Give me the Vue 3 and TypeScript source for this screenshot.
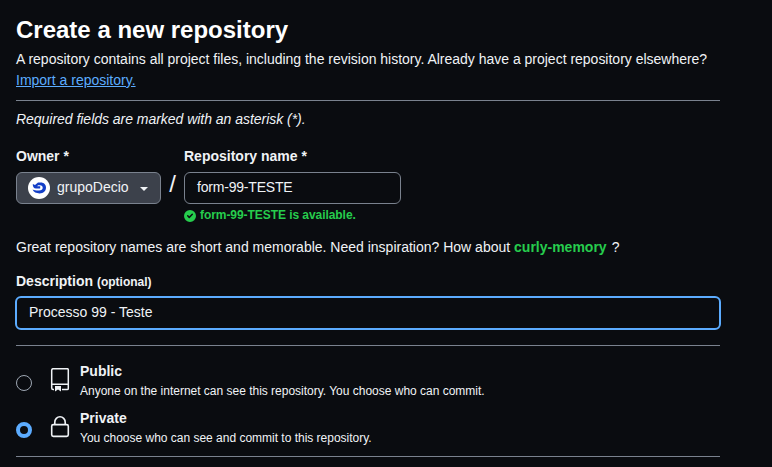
<script setup lang="ts">
import { ref } from 'vue'

interface Visibility {
  id: string
  title: string
  note: string
}

const owner = ref('grupoDecio')
const repoName = ref('form-99-TESTE')
const description = ref('Processo 99 - Teste')
const selected = ref('private')
const options: Visibility[] = [
  { id: 'public', title: 'Public', note: 'Anyone on the internet can see this repository. You choose who can commit.' },
  { id: 'private', title: 'Private', note: 'You choose who can see and commit to this repository.' },
]
</script>

<template>
  <main class="page">
    <h1 class="title">Create a new repository</h1>
    <p class="lead">
      <span>A repository contains all project files, including the revision history. Already have a project repository elsewhere?</span><br />
      <a class="link" href="#">Import a repository.</a>
    </p>
    <p class="required">Required fields are marked with an asterisk (*).</p>

    <div class="names">
      <div class="owner">
        <label class="label">Owner *</label>
        <button class="owner-btn" type="button">
          <svg class="avatar" width="22" height="22" viewBox="0 0 22 22">
            <circle cx="11" cy="11" r="11" fill="#fff" />
            <path d="M4.8 7 L7 8 L10 5.4 H12.8 C16 5.4 18 7.6 18 10.6 C18 14.2 15.3 16.4 11.6 16.4 C8.2 16.4 5.6 15.2 4.6 12.6 C6.6 13.4 8.4 13.6 11 13.5 C13.4 13.4 14.7 12.5 14.7 10.7 C14.7 9.2 13.8 8.3 12 8.3 H10 L9.2 9.2 H12.2 V11.6 H8 C5.8 11.6 4.6 9.6 4.8 7 Z" fill="#143fc7" />
          </svg>
          <span class="owner-name">{{ owner }}</span>
          <svg class="caret" width="8" height="4" viewBox="0 0 8 4"><path d="M0 0h8L4 4z" fill="#f0f3f6" /></svg>
        </button>
      </div>
      <span class="slash">/</span>
      <div class="repo">
        <label class="label">Repository name *</label>
        <div class="field repo-field">{{ repoName }}</div>
        <div class="available">
          <svg width="12" height="12" viewBox="0 0 12 12">
            <path fill="#26cd4d" fill-rule="evenodd" d="M6 0a6 6 0 1 1 0 12A6 6 0 0 1 6 0Zm2.83 4.83a.75.75 0 0 0-1.06-1.06L5.25 6.29 4.23 5.27a.75.75 0 0 0-1.06 1.06l1.55 1.55a.75.75 0 0 0 1.06 0Z" />
          </svg>
          <span>{{ repoName }} is available.</span>
        </div>
      </div>
    </div>

    <p class="hint">Great repository names are short and memorable. Need inspiration? How about <strong>curly-memory</strong><span class="q">?</span></p>

    <label class="label desc-label">Description <small>(optional)</small></label>
    <div class="field desc-field">{{ description }}</div>

    <div class="choices">
      <div v-for="o in options" :key="o.id" class="choice" @click="selected = o.id">
        <span class="radio" :class="{ on: selected === o.id }"></span>
        <svg v-if="o.id === 'public'" class="icon" width="24" height="24" viewBox="0 0 24 24" fill="none" stroke="#f0f3f6" stroke-width="1.5">
          <path d="M6 21.6H5.2A1.5 1.5 0 0 1 3.7 20.1V2.2A1.5 1.5 0 0 1 5.2.7H19.2A1.1 1.1 0 0 1 20.3 1.8V20.5A1.1 1.1 0 0 1 19.2 21.6H14M3.7 16.3H20.3" />
          <path d="M7 18h6v5.5l-3-1.9-3 1.9z" fill="#f0f3f6" stroke="none" />
        </svg>
        <svg v-else class="icon" width="24" height="24" viewBox="0 0 24 24" fill="none" stroke="#f0f3f6" stroke-width="1.6">
          <rect x="3.7" y="9.6" width="16.6" height="11.8" rx="1.6" />
          <path d="M6.8 9.6V7.2a5.2 5.4 0 0 1 10.4 0v2.4" />
        </svg>
        <div class="choice-text">
          <div class="choice-title">{{ o.title }}</div>
          <div class="choice-note">{{ o.note }}</div>
        </div>
      </div>
    </div>
  </main>
</template>

<style>
body {
  background: #0a0c10;
}
</style>

<style scoped>
.page {
  box-sizing: border-box;
  width: 772px;
  height: 467px;
  overflow: hidden;
  padding: 12px 52px 0 16px;
  background: #0a0c10;
  color: #f0f3f6;
  font: 14px/21px "Liberation Sans", Arial, sans-serif;
  white-space: nowrap;
}
.title {
  margin: 0;
  font-size: 24px;
  line-height: 36px;
  font-weight: 700;
  color: #fff;
}
.lead {
  margin: 0;
  padding-top: 1px;
  height: 51px;
  border-bottom: 1px solid #7a828e;
}
.lead span {
  letter-spacing: -0.01px;
}
.link {
  color: #5cacff;
  text-decoration: underline;
}
.required {
  margin: 8px 0 0;
  font-style: italic;
  letter-spacing: -0.03px;
}
.names {
  display: flex;
  margin-top: 16px;
}
.label {
  display: block;
  font-weight: 700;
}
.owner-btn {
  display: flex;
  align-items: center;
  box-sizing: border-box;
  width: 145px;
  height: 32px;
  margin-top: 5px;
  padding: 0 11px;
  border: 1px solid #7a828e;
  border-radius: 6px;
  background: #3c414b;
  color: #f0f3f6;
  font: inherit;
}
.owner-name {
  margin: -2px 0 0 7px;
}
.caret {
  margin: 2px 1px 0 auto;
}
.slash {
  width: 23px;
  padding-top: 27px;
  text-align: center;
  font-size: 24px;
  line-height: 21px;
}
.field {
  box-sizing: border-box;
  border: 1px solid #7a828e;
  border-radius: 6px;
  padding: 0 12px;
  line-height: 29px;
}
.repo-field {
  width: 217px;
  height: 32px;
  margin-top: 5px;
  letter-spacing: -0.2px;
}
.available {
  display: flex;
  align-items: center;
  gap: 4px;
  height: 18px;
  margin-top: 2px;
  color: #26cd4d;
  font-size: 12px;
  font-weight: 700;
  line-height: 18px;
  letter-spacing: -0.06px;
}
.available svg {
  margin-top: 2px;
}
.hint {
  margin: 13px 0 0;
}
.hint strong {
  color: #26cd4d;
}
.q {
  margin-left: 5px;
}
.desc-label {
  margin-top: 13px;
}
.desc-label small {
  font-size: 12px;
}
.desc-field {
  height: 34px;
  margin: 3px -1px 0;
  border: 2px solid #5cacff;
  line-height: 28px;
}
.choices {
  box-sizing: border-box;
  height: 112px;
  margin-top: 15px;
  padding-top: 15px;
  border-top: 1px solid #7a828e;
  border-bottom: 1px solid #7a828e;
}
.choice {
  display: flex;
  height: 47px;
}
.radio {
  box-sizing: border-box;
  width: 16px;
  height: 16px;
  margin-top: 14px;
  border: 1px solid #9ea7b3;
  border-radius: 50%;
}
.radio.on {
  border: 4px solid #5cacff;
}
.icon {
  margin: 7px 8px 0 16px;
}
.choice-title {
  font-weight: 700;
  line-height: 21px;
}
.choice-note {
  font-size: 12px;
  line-height: 18px;
  letter-spacing: -0.01px;
}
</style>
